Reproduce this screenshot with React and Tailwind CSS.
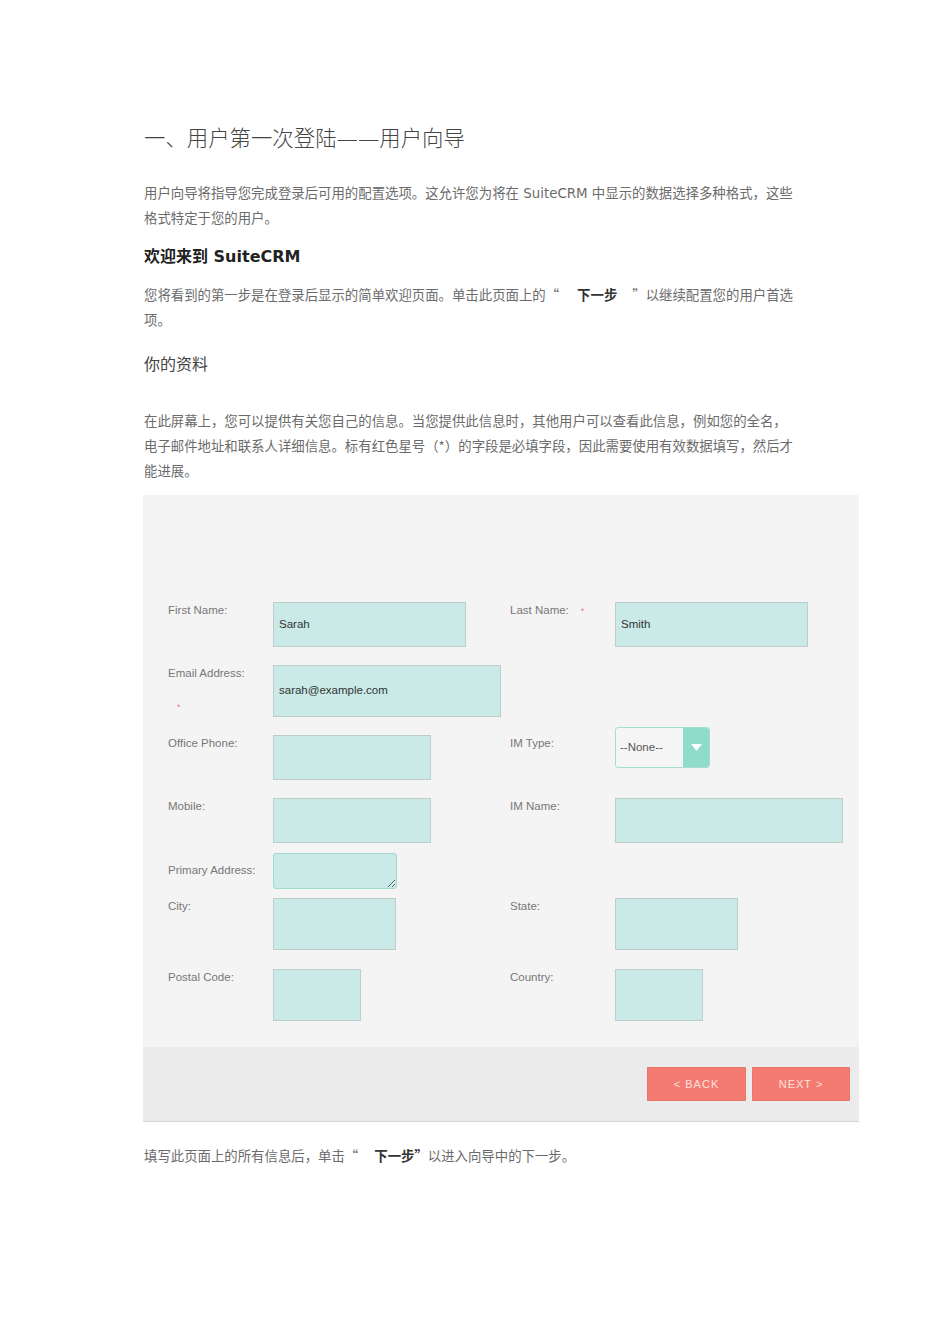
import React from "react";

const cjk = "font-['Noto_Sans_CJK_SC','DejaVu_Sans',sans-serif]";
const latin = "font-['DejaVu_Sans','Noto_Sans_CJK_SC',sans-serif] leading-[0]";
const arial = "font-['Liberation_Sans',Arial,sans-serif]";

function Label({ children }) {
  return (
    <div className={`w-[105px] shrink-0 text-[11.5px] leading-[16px] text-[#777] ${arial}`}>
      {children}
    </div>
  );
}

function Box({ className, children }) {
  return (
    <div
      className={`flex items-center border border-[#bfcdca] bg-[#c9eae6] pl-[5px] text-[11.5px] text-[#333] ${arial} ${className}`}
    >
      {children}
    </div>
  );
}

export default function App() {
  return (
    <div className={`min-h-[1344px] w-[950px] bg-white ${cjk}`}>
      <div className="pl-[143px] pt-[122px]">
        <h1 className="pl-[1px] text-[21.4px] leading-[30px] font-light text-[#444]">
          一、用户第一次登陆<span className="font-['DejaVu_Sans',sans-serif] font-extralight leading-[0]">——</span>用户向导
        </h1>

        <p className="mt-[28px] pl-[1px] text-[13.4px] leading-[25px] text-[#6b6b6b]">
          用户向导将指导您完成登录后可用的配置选项。这允许您为将在
          <span className={latin}> SuiteCRM </span>
          中显示的数据选择多种格式，这些
          <br />
          格式特定于您的用户。
        </p>

        <h2 className="mt-[13px] pl-[1px] text-[16px] leading-[24px] font-bold text-[#222]">
          欢迎来到<span className={latin}> SuiteCRM</span>
        </h2>

        <p className="mt-[15px] pl-[1px] text-[13.4px] leading-[25px] text-[#6b6b6b]">
          您将看到的第一步是在登录后显示的简单欢迎页面。单击此页面上的“
          <span className="inline-block w-[18px]"></span>
          <span className="font-bold text-[#333]">下一步</span>
          <span className="inline-block w-[15px]"></span>
          ”以继续配置您的用户首选
          <br />
          项。
        </p>

        <h3 className="mt-[19px] pl-[1px] text-[16px] leading-[24px] font-normal text-[#444]">
          你的资料
        </h3>

        <p className="mt-[33px] pl-[1px] text-[13.4px] leading-[25px] text-[#6b6b6b]">
          在此屏幕上，您可以提供有关您自己的信息。当您提供此信息时，其他用户可以查看此信息，例如您的全名，
          <br />
          电子邮件地址和联系人详细信息。标有红色星号（*）的字段是必填字段，因此需要使用有效数据填写，然后才
          <br />
          能进展。
        </p>

        {/* Form panel */}
        <div className="mt-[12px] w-[716px] border-b border-[#d6d6d6] bg-[#f4f4f4]">
          <div className="pl-[25px] pt-[107px] pb-[26px]">
            {/* Row 1 */}
            <div className="flex">
              <div className="flex w-[342px]">
                <Label>First Name:</Label>
                <Box className="h-[45px] w-[193px]">Sarah</Box>
              </div>
              <div className="flex">
                <Label>
                  Last Name:<span className="ml-[12px] text-[9px] text-[#f08080]">*</span>
                </Label>
                <Box className="h-[45px] w-[193px]">Smith</Box>
              </div>
            </div>

            {/* Row 2 */}
            <div className="mt-[18px] flex">
              <div className="flex w-[342px]">
                <Label>
                  Email Address:
                  <div className="mt-[18px] pl-[9px] text-[9px] text-[#f08080]">*</div>
                </Label>
                <Box className="h-[52px] w-[228px]">sarah@example.com</Box>
              </div>
            </div>

            {/* Row 3 */}
            <div className="mt-[18px] flex">
              <div className="flex w-[342px]">
                <Label>Office Phone:</Label>
                <Box className="h-[45px] w-[158px]"></Box>
              </div>
              <div className="flex">
                <Label>IM Type:</Label>
                <div className="-mt-[8px] flex h-[41px] w-[95px] overflow-hidden rounded-[3px] border border-[#a6ddd2] bg-[#f5f5f5]">
                  <div className={`flex flex-1 items-center pl-[4px] text-[11.5px] text-[#555] ${arial}`}>
                    --None--
                  </div>
                  <div className="flex w-[26px] items-center justify-center bg-[#8fdcca]">
                    <svg width="11" height="7" viewBox="0 0 11 7">
                      <path d="M0 0 H11 L5.5 7 Z" fill="#ffffff" />
                    </svg>
                  </div>
                </div>
              </div>
            </div>

            {/* Row 4 */}
            <div className="mt-[18px] flex">
              <div className="flex w-[342px]">
                <Label>Mobile:</Label>
                <Box className="h-[45px] w-[158px]"></Box>
              </div>
              <div className="flex">
                <Label>IM Name:</Label>
                <Box className="h-[45px] w-[228px]"></Box>
              </div>
            </div>

            {/* Row 5 */}
            <div className="mt-[10px] flex">
              <div className="flex w-[342px]">
                <div className="pt-[9px]">
                  <Label>Primary Address:</Label>
                </div>
                <textarea
                  readOnly
                  className="block h-[36px] w-[124px] rounded-[3px] border border-[#9fd8cc] bg-[#c9eae6] outline-none"
                ></textarea>
              </div>
            </div>

            {/* Row 6 */}
            <div className="mt-[9px] flex">
              <div className="flex w-[342px]">
                <Label>City:</Label>
                <Box className="h-[52px] w-[123px]"></Box>
              </div>
              <div className="flex">
                <Label>State:</Label>
                <Box className="h-[52px] w-[123px]"></Box>
              </div>
            </div>

            {/* Row 7 */}
            <div className="mt-[19px] flex">
              <div className="flex w-[342px]">
                <Label>Postal Code:</Label>
                <Box className="h-[52px] w-[88px]"></Box>
              </div>
              <div className="flex">
                <Label>Country:</Label>
                <Box className="h-[52px] w-[88px]"></Box>
              </div>
            </div>
          </div>

          {/* Footer */}
          <div className="flex h-[74px] items-center justify-end gap-[6px] bg-[#ebebeb] pr-[9px]">
            <button
              className={`h-[34px] w-[99px] border border-[#e9776d] bg-[#f47b71] text-[11px] tracking-[1px] text-[#fde2de] ${arial}`}
            >
              &lt; BACK
            </button>
            <button
              className={`h-[34px] w-[98px] border border-[#e9776d] bg-[#f47b71] text-[11px] tracking-[1px] text-[#fde2de] ${arial}`}
            >
              NEXT &gt;
            </button>
          </div>
        </div>

        <p className="mt-[21px] pl-[1px] text-[13.4px] leading-[25px] text-[#6b6b6b]">
          填写此页面上的所有信息后，单击“
          <span className="inline-block w-[16px]"></span>
          <span className="font-bold text-[#333]">下一步”</span>
          以进入向导中的下一步。
        </p>
      </div>
    </div>
  );
}
